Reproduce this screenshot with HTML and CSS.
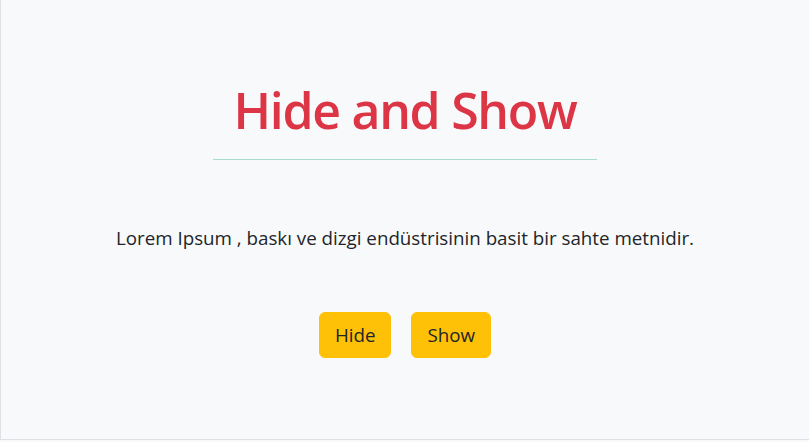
FILE: index.html
```html
<!DOCTYPE html>
<html lang="tr">
<head>
<meta charset="utf-8">
<title>Hide and Show</title>
<link rel="stylesheet" href="styles.css">
</head>
<body>
<main class="page">
  <h1 class="title">Hide and Show</h1>
  <hr class="rule">
  <p class="lead">Lorem Ipsum , baskı ve dizgi endüstrisinin basit bir sahte metnidir.</p>
  <div class="actions">
    <button class="btn" type="button">Hide</button>
    <button class="btn" type="button">Show</button>
  </div>
</main>
</body>
</html>
```
FILE: styles.css
```css
* { box-sizing: border-box; }
html, body { margin: 0; padding: 0; background: #f8f9fa; }
body {
  font-family: "Open Sans", "Noto Sans", sans-serif;
  color: #212529;
}
.page {
  height: 440px;
  border-left: 1px solid #dee2e6;
  border-bottom: 1px solid #dee2e6;
  display: flex;
  flex-direction: column;
  align-items: center;
  padding-top: 80px;
}
.title {
  margin: 0;
  font-size: 50px;
  font-weight: 600;
  line-height: 60px;
  color: #dc3545;
  letter-spacing: -1.3px;
}
.rule {
  width: 384px;
  margin: 19px 0 0;
  border: 0;
  border-top: 1px solid #a6dccd;
}
.lead {
  margin: 64px 0 0;
  font-size: 18.75px;
  line-height: 28px;
}
.actions {
  margin-top: 60px;
  display: flex;
  gap: 20px;
}
.btn {
  font-family: inherit;
  font-size: 18.75px;
  line-height: 26px;
  color: #212529;
  background: #ffc107;
  border: 1px solid #ffc107;
  border-radius: 6px;
  height: 46px;
  padding: 0 15px;
}
```
